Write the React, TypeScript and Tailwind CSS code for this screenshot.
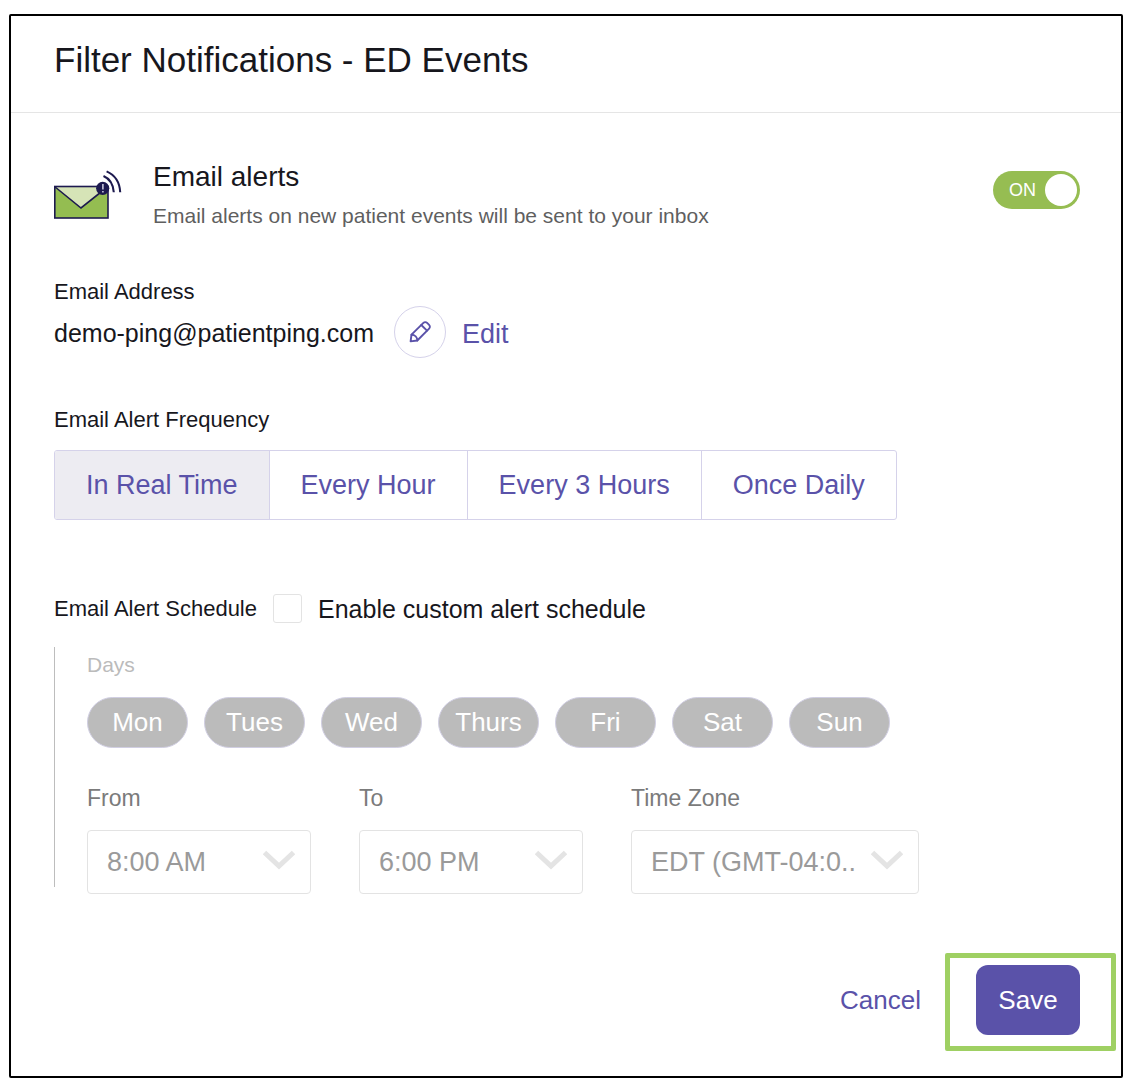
import { useState } from "react";

const frequencies = ["In Real Time", "Every Hour", "Every 3 Hours", "Once Daily"];
const days = ["Mon", "Tues", "Wed", "Thurs", "Fri", "Sat", "Sun"];

function MailIcon() {
  return (
    <svg viewBox="1 0 70 50" className="h-[50px] w-[70px] shrink-0" fill="none" aria-hidden="true">
      <rect x="1.5" y="16.5" width="53.5" height="31.5" fill="#94bd51" />
      <path d="M1.5 16.5H55L28 38Z" fill="#d6e4b7" />
      <path d="M1.5 16.5L28 38L55 16.5" stroke="#1d1a4f" strokeWidth="1.6" />
      <rect x="1.8" y="16.5" width="53.2" height="31.5" stroke="#1d1a4f" strokeWidth="1.6" />
      <circle cx="49.7" cy="18.3" r="6.6" fill="#1d1a4f" />
      <path d="M49.9 14V19.4M49.9 21V22.6" stroke="#c9c8dc" strokeWidth="1.6" />
      <path d="M50.5 6C56.5 8.6 60.3 14.5 60.8 22.3M53.6 1.4C61.8 5 66.7 12.5 67.2 22.3" stroke="#1d1a4f" strokeWidth="2.1" />
    </svg>
  );
}

function PencilIcon() {
  return (
    <svg
      viewBox="0 0 24 24"
      className="size-6"
      fill="none"
      stroke="#5a52a9"
      strokeWidth="1.9"
      strokeLinejoin="round"
      strokeLinecap="round"
      aria-hidden="true"
    >
      <path d="M2.6 21.4L3.5 14.7L15.4 2.9a2.6 2.6 0 0 1 3.7 0l2 2a2.6 2.6 0 0 1 0 3.7L9.3 20.5Z" />
      <path d="M13.3 5L19 10.7M3.5 14.7C6.8 14.7 9.3 17.2 9.3 20.5" />
    </svg>
  );
}

function SelectField({ id, label, value, width }: { id: string; label: string; value: string; width: string }) {
  return (
    <div className={width}>
      <label htmlFor={id} className="block text-[23px] leading-7 text-[#7b7b7b]">
        {label}
      </label>
      <div className="relative mt-[18px]">
        <select
          id={id}
          disabled
          className="h-16 w-full appearance-none rounded-[4px] border border-[#e3e3e3] bg-white pl-[19px] pr-12 text-[27px] text-[#9a9a9a] opacity-100"
        >
          <option>{value}</option>
        </select>
        <svg
          viewBox="0 0 32 20"
          className="pointer-events-none absolute right-4 top-5 h-5 w-8"
          fill="none"
          stroke="#e4e4e4"
          strokeWidth="5"
          aria-hidden="true"
        >
          <path d="M1.5 2.5L16 16L30.5 2.5" />
        </svg>
      </div>
    </div>
  );
}

export default function App() {
  const [on, setOn] = useState(true);
  const [frequency, setFrequency] = useState("In Real Time");

  return (
    <main className="bg-white px-[9px] pt-[14px] pb-[10px] font-['Liberation_Sans',Arial,sans-serif] text-[#17171d]">
      <section className="rounded-[2px] border-2 border-black">
        <header className="border-b border-[#e5e5e5] px-[43px] pt-[22px] pb-[30px]">
          <h1 className="text-[35px] leading-[44px]">Filter Notifications - ED Events</h1>
        </header>

        <div className="pt-[46px] pr-[41px] pl-[43px]">
          <div className="flex items-start">
            <div className="pt-[11px]">
              <MailIcon />
            </div>
            <div className="ml-[29px] flex-1">
              <h2 className="text-[28px] leading-9">Email alerts</h2>
              <p className="mt-[7px] text-[21px] leading-7 text-[#5f5f5f]">
                Email alerts on new patient events will be sent to your inbox
              </p>
            </div>
            <button
              type="button"
              role="switch"
              aria-checked={on}
              aria-label="Email alerts"
              onClick={() => setOn(!on)}
              className="mt-3 flex h-[38px] w-[87px] items-center justify-between rounded-full bg-[#96bd52] pr-[3px] pl-4 text-lg text-white"
            >
              {on ? "ON" : "OFF"}
              <span className="size-8 rounded-full bg-white" />
            </button>
          </div>

          <h3 className="mt-12 text-[22px] leading-7">Email Address</h3>
          <div className="flex items-center">
            <span className="pt-1 text-[25px]">demo-ping@patientping.com</span>
            <button type="button" className="flex items-center text-[27px] text-[#5a52a9]">
              <span className="ml-5 flex size-[52px] items-center justify-center rounded-full border border-[#d5d2ea]">
                <PencilIcon />
              </span>
              <span className="ml-4 pt-1">Edit</span>
            </button>
          </div>

          <h3 className="mt-12 text-[22px] leading-7">Email Alert Frequency</h3>
          <div className="mt-4 flex h-[70px] w-fit divide-x divide-[#d5d2ea] overflow-hidden rounded-[3px] border border-[#d5d2ea]">
            {frequencies.map((name) => (
              <button
                key={name}
                type="button"
                aria-pressed={frequency === name}
                onClick={() => setFrequency(name)}
                className="px-[31px] text-[27px] whitespace-nowrap text-[#5a52a9] aria-pressed:bg-[#edecf2]"
              >
                {name}
              </button>
            ))}
          </div>

          <div className="mt-[74px] flex items-center">
            <h3 className="text-[22px] leading-7">Email Alert Schedule</h3>
            <input
              id="custom"
              type="checkbox"
              className="ml-4 size-[29px] appearance-none rounded-[3px] border border-[#e3e3e3] bg-white checked:bg-[#5a52a9]"
            />
            <label htmlFor="custom" className="ml-4 text-[25px] leading-7">
              Enable custom alert schedule
            </label>
          </div>

          <div className="mt-6 flex flex-col border-l border-[#bdbdbd] pt-1 pl-8">
            <h4 className="text-[21px] leading-7 text-[#bbbbbb]">Days</h4>
            <div className="mt-[18px] flex gap-4">
              {days.map((day) => (
                <button
                  key={day}
                  type="button"
                  disabled
                  className="h-[51px] w-[101px] rounded-full border border-[#d0cee2] bg-[#bbbbbb] text-[26px] text-white"
                >
                  {day}
                </button>
              ))}
            </div>
            <div className="mt-9 -mb-[7px] flex gap-12">
              <SelectField id="from" label="From" value="8:00 AM" width="w-56" />
              <SelectField id="to" label="To" value="6:00 PM" width="w-56" />
              <SelectField id="zone" label="Time Zone" value="EDT (GMT-04:0.." width="w-72" />
            </div>
          </div>
        </div>

        <footer className="mt-[66px] mb-[25px] flex items-center justify-end pr-[5px]">
          <button type="button" className="mr-6 pb-1 text-[26px] text-[#5a52a9]">
            Cancel
          </button>
          <div className="rounded-[2px] border-[5px] border-[#9fd063] pt-[7px] pr-[31px] pb-[11px] pl-[26px]">
            <button type="button" className="h-[70px] w-[104px] rounded-xl bg-[#5a52a9] text-[26px] text-white">
              Save
            </button>
          </div>
        </footer>
      </section>
    </main>
  );
}
